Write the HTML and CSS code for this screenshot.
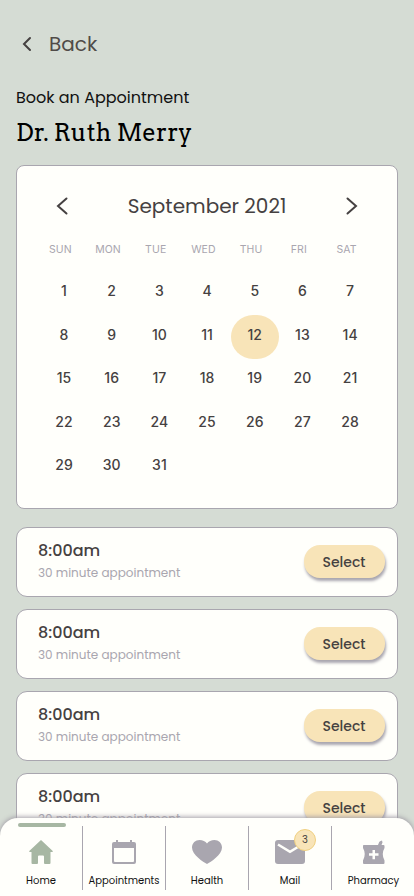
FILE: index.html
```html
<!DOCTYPE html>
<html lang="en">
<head>
<meta charset="utf-8">
<meta name="viewport" content="width=device-width, initial-scale=1">
<title>Book an Appointment</title>
<link rel="stylesheet" href="styles.css">
</head>
<body>
<div class="screen">
  <header class="back">
    <svg width="10" height="16" viewBox="0 0 10 16"><path d="M8 2 2 8l6 6"/></svg>
    <span>Back</span>
  </header>
  <p class="eyebrow">Book an Appointment</p>
  <h1>Dr. Ruth Merry</h1>

  <section class="calendar">
    <div class="month">
      <svg width="12" height="18" viewBox="0 0 12 18"><path d="M10.500 1.500 2 9l8.500 7.500"/></svg>
      <h2>September 2021</h2>
      <svg width="12" height="18" viewBox="0 0 12 18"><path d="m1.500 1.500 8.500 7.500-8.500 7.500"/></svg>
    </div>
    <div class="weekdays"><span>SUN</span><span>MON</span><span>TUE</span><span>WED</span><span>THU</span><span>FRI</span><span>SAT</span></div>
    <div class="days">
      <span>1</span><span>2</span><span>3</span><span>4</span><span>5</span><span>6</span><span>7</span>
      <span>8</span><span>9</span><span>10</span><span>11</span><span class="selected">12</span><span>13</span><span>14</span>
      <span>15</span><span>16</span><span>17</span><span>18</span><span>19</span><span>20</span><span>21</span>
      <span>22</span><span>23</span><span>24</span><span>25</span><span>26</span><span>27</span><span>28</span>
      <span>29</span><span>30</span><span>31</span>
    </div>
  </section>

  <section class="slots">
    <article class="slot"><div><h3>8:00am</h3><p>30 minute appointment</p></div><button>Select</button></article>
    <article class="slot"><div><h3>8:00am</h3><p>30 minute appointment</p></div><button>Select</button></article>
    <article class="slot"><div><h3>8:00am</h3><p>30 minute appointment</p></div><button>Select</button></article>
    <article class="slot"><div><h3>8:00am</h3><p>30 minute appointment</p></div><button>Select</button></article>
  </section>

  <nav class="tabs">
    <a class="tab active">
      <svg width="24" height="24" viewBox="0 0 24 24"><path d="M12 0 24 11.300 23.300 12H21.500V23a1 1 0 0 1-1 1H16a1 1 0 0 1-1-1V16.500a1 1 0 0 0-1-1H10a1 1 0 0 0-1 1V23a1 1 0 0 1-1 1H3.500a1 1 0 0 1-1-1V12H.7L0 11.300Z"/></svg>
      <span>Home</span>
    </a>
    <a class="tab">
      <svg width="24" height="24" viewBox="0 0 24 24"><path fill-rule="evenodd" d="M4 0H6V2H18V0H20V2H22a2 2 0 0 1 2 2V22a2 2 0 0 1-2 2H2a2 2 0 0 1-2-2V4A2 2 0 0 1 2 2H4ZM2 8V21a1 1 0 0 0 1 1H21a1 1 0 0 0 1-1V8Z"/></svg>
      <span>Appointments</span>
    </a>
    <a class="tab">
      <svg width="30" height="24" viewBox="0 0 30 24"><path d="M15 24C11.500 22 0 15 0 7.500 0 3 3.500 0 7.500 0 10.700 0 13.500 1.200 15 3.500 16.500 1.200 19.300 0 22.500 0 26.500 0 30 3 30 7.500 30 15 18.500 22 15 24Z"/></svg>
      <span>Health</span>
    </a>
    <a class="tab">
      <svg width="30" height="24" viewBox="0 0 30 24"><path d="M3 0H27a3 3 0 0 1 3 3V21a3 3 0 0 1-3 3H3a3 3 0 0 1-3-3V3A3 3 0 0 1 3 0Z"/><path class="flap" d="M3 4.500 15 11.800 27 4.500"/></svg>
      <span>Mail</span>
      <b class="badge">3</b>
    </a>
    <a class="tab">
      <svg width="24" height="24" viewBox="0 0 24 24"><path fill-rule="evenodd" d="M1.500 5H16L17.200 2Q17.500 1 20 .5L20.500 2.500 19.500 5H21.500a1 1 0 0 1 1 1V8Q19 14 22.500 20.500V23a1 1 0 0 1-1 1H2a1 1 0 0 1-1-1V20.500Q4.500 14 1 8V6A1 1 0 0 1 1.500 5ZM10.500 10V13.300H7V15.800H10.500V19.200H13V15.800H16.500V13.300H13V10Z"/></svg>
      <span>Pharmacy</span>
    </a>
  </nav>
</div>
</body>
</html>
```
FILE: styles.css
```css
* { box-sizing: border-box; }
body { margin: 0; background: #d5dcd4; font-family: Poppins, Inter, sans-serif; color: #454141; }
h1, h2, h3, p { margin: 0; font-weight: 400; }
.screen { width: 414px; height: 896px; overflow: hidden; padding: 29px 16px 0; position: relative; }
svg { flex: none; display: block; }
.back { display: flex; align-items: center; height: 30px; padding-left: 6px; gap: 17px; font-size: 20px; color: #504b48; }
.back svg, .month svg { fill: none; stroke: #454141; stroke-width: 2; stroke-linecap: round; }
.eyebrow { margin-top: 27px; height: 24px; line-height: 24px; font-size: 16px; color: #111; }
h1 { height: 36px; margin-top: 5px; line-height: 36px; font-family: Arvo, "DejaVu Serif", serif; font-size: 24px; color: #000; white-space: nowrap; }
.calendar { margin-top: 14px; height: 344px; border: 1px solid #a9a6af; border-radius: 8px; background: #fffffb; padding: 25px 18px 0; }
.month { display: flex; justify-content: space-between; align-items: center; height: 30px; padding: 0 21px; }
h2 { font-size: 20px; white-space: nowrap; }
.weekdays { display: grid; grid-template-columns: repeat(7, 47.7px); height: 20px; margin: 19px 0 0 1.5px; line-height: 20px; font-family: Inter, sans-serif; font-size: 10.5px; letter-spacing: .1px; color: #a9a6af; text-align: center; }
.days { display: grid; grid-template-columns: repeat(7, 47.7px); grid-auto-rows: 43.6px; margin: 9px 0 0 5.2px; font-family: Inter, sans-serif; font-size: 14px; font-weight: 450; letter-spacing: .1px; text-align: center; }
.days span { line-height: 44px; }
.days .selected { position: relative; z-index: 0; }
.days .selected::before { content: ""; position: absolute; z-index: -1; top: 2px; left: 0; width: 48px; height: 44px; border-radius: 22px; background: #f8e4b8; }
.slots { display: grid; gap: 12px; margin-top: 18px; }
.slot { height: 70px; border: 1px solid #a9a6af; border-radius: 11px; background: #fffffb; display: flex; justify-content: space-between; padding: 11px 12px 0 21px; }
.slot h3 { font-size: 16px; line-height: 24px; font-weight: 500; }
.slot p { margin-top: 1px; font-size: 12px; line-height: 18px; color: #a9a6af; white-space: nowrap; }
.slot button { width: 81px; height: 33px; margin-top: 6px; padding: 1px 1px 0 0; border: 0; border-radius: 16px; background: #f8e4b8; box-shadow: 1px 3px 3px #a9a6af; font: 500 14px Poppins, Inter, sans-serif; color: #454141; }
.tabs { position: absolute; left: 0; right: 0; bottom: 0; height: 78px; padding-top: 8px; display: grid; grid-template-columns: repeat(5, 83px); background: #fffffb; border-radius: 18px 18px 0 0; box-shadow: 0 -1px 5px #a09ca5; }
.tab { position: relative; height: 64px; display: flex; flex-direction: column; align-items: center; padding-top: 14px; border-right: 1px solid #a9a6af; fill: #a9a6af; color: #111; font-size: 10px; }
.tab:last-child { border: 0; }
.tab span { margin-top: 9px; line-height: 16px; white-space: nowrap; }
.active { fill: #a7b7a3; }
.active::before { content: ""; position: absolute; top: -3px; left: 18px; width: 48px; height: 4px; border-radius: 2px; background: #a7b7a3; }
.flap { fill: none; stroke: #fffffb; stroke-width: 2.5; }
.badge { position: absolute; left: 45px; top: 3px; width: 22px; height: 22px; border: 1px solid #f0d080; border-radius: 50%; background: #f8e4b8; text-align: center; font-size: 10px; font-weight: 400; line-height: 20px; color: #454141; }
```
